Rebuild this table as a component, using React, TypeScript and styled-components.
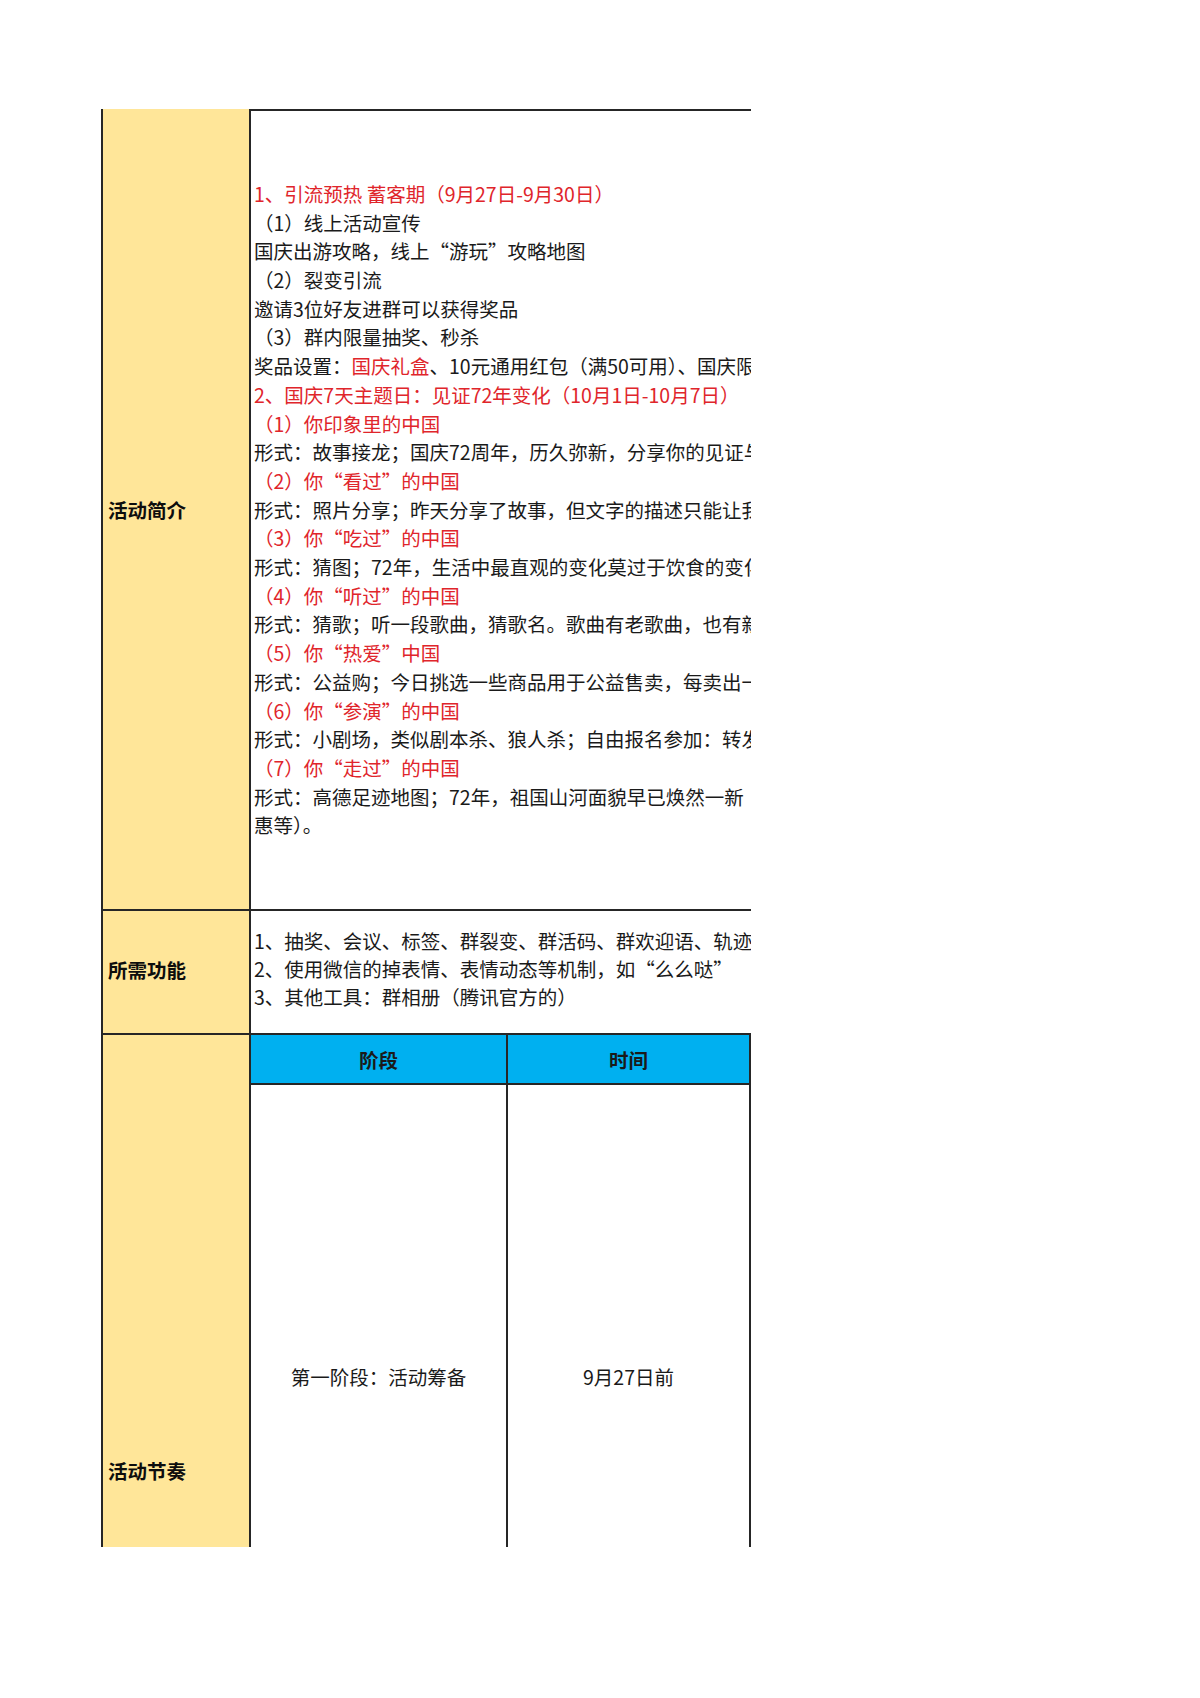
import styled, { createGlobalStyle } from 'styled-components';

const GlobalStyle = createGlobalStyle`
  html, body {
    margin: 0;
    padding: 0;
    background: #ffffff;
  }
  body {
    font-family: "Noto Sans CJK SC", "Noto Sans", sans-serif;
    color: #1a1a1a;
  }
`;

type Segment = { text: string; red?: boolean };
type Line = Segment[];

const intro: Line[] = [
  [{ text: '1、引流预热 蓄客期（9月27日-9月30日）', red: true }],
  [{ text: '（1）线上活动宣传' }],
  [{ text: '国庆出游攻略，线上“游玩”攻略地图' }],
  [{ text: '（2）裂变引流' }],
  [{ text: '邀请3位好友进群可以获得奖品' }],
  [{ text: '（3）群内限量抽奖、秒杀' }],
  [
    { text: '奖品设置：' },
    { text: '国庆礼盒', red: true },
    { text: '、10元通用红包（满50可用）、国庆限定周边、会员积分' },
  ],
  [{ text: '2、国庆7天主题日：见证72年变化（10月1日-10月7日）', red: true }],
  [{ text: '（1）你印象里的中国', red: true }],
  [{ text: '形式：故事接龙；国庆72周年，历久弥新，分享你的见证与回忆' }],
  [{ text: '（2）你“看过”的中国', red: true }],
  [{ text: '形式：照片分享；昨天分享了故事，但文字的描述只能让我们想象' }],
  [{ text: '（3）你“吃过”的中国', red: true }],
  [{ text: '形式：猜图；72年，生活中最直观的变化莫过于饮食的变化' }],
  [{ text: '（4）你“听过”的中国', red: true }],
  [{ text: '形式：猜歌；听一段歌曲，猜歌名。歌曲有老歌曲，也有新歌曲' }],
  [{ text: '（5）你“热爱”中国', red: true }],
  [{ text: '形式：公益购；今日挑选一些商品用于公益售卖，每卖出一件捐出' }],
  [{ text: '（6）你“参演”的中国', red: true }],
  [{ text: '形式：小剧场，类似剧本杀、狼人杀；自由报名参加：转发海报' }],
  [{ text: '（7）你“走过”的中国', red: true }],
  [{ text: '形式：高德足迹地图；72年，祖国山河面貌早已焕然一新（打卡优' }],
  [{ text: '惠等）。' }],
];

const features: string[] = [
  '1、抽奖、会议、标签、群裂变、群活码、群欢迎语、轨迹追踪',
  '2、使用微信的掉表情、表情动态等机制，如“么么哒”',
  '3、其他工具：群相册（腾讯官方的）',
];

const stages = [
  { stage: '第一阶段：活动筹备', time: '9月27日前', height: 584 },
  { stage: '第二阶段：引流预热', time: '9月27日-9月30日', height: 200 },
];

export default function App() {
  return (
    <>
      <GlobalStyle />
      <Page>
        <Sheet>
          <Row $height={802} $divider>
            <Label>活动简介</Label>
            <Content $topLine>
              {intro.map((line, i) => (
                <TextLine key={i}>
                  {line.map((seg, j) => (
                    <Seg key={j} $red={seg.red}>
                      {seg.text}
                    </Seg>
                  ))}
                </TextLine>
              ))}
            </Content>
          </Row>

          <Row $height={124} $divider $lift={6}>
            <Label>所需功能</Label>
            <Content>
              {features.map((f, i) => (
                <FeatureLine key={i}>{f}</FeatureLine>
              ))}
            </Content>
          </Row>

          <Row $height={870}>
            <Label>活动节奏</Label>
            <PlanTable>
              <HeadCell>阶段</HeadCell>
              <HeadCell>时间</HeadCell>
              {stages.map((s) => (
                <StageRow key={s.stage}>
                  <BodyCell style={{ height: s.height }}>{s.stage}</BodyCell>
                  <BodyCell style={{ height: s.height }}>{s.time}</BodyCell>
                </StageRow>
              ))}
            </PlanTable>
          </Row>
        </Sheet>
      </Page>
    </>
  );
}

const line = '2px solid #262626';

const Page = styled.div`
  padding: 109px 0 0 101px;
  height: 1698px;
  box-sizing: border-box;
`;

const Sheet = styled.div`
  width: 650px;
  height: 1438px;
  overflow: hidden;
  display: flex;
  flex-direction: column;
`;

const Row = styled.div<{ $height: number; $divider?: boolean; $lift?: number }>`
  display: grid;
  grid-template-columns: 150px minmax(0, 1fr);
  grid-template-rows: minmax(0, 1fr);
  flex: 0 0 auto;
  height: ${(p) => p.$height}px;
  box-sizing: border-box;
  ${(p) => (p.$divider ? `border-bottom: ${line};` : '')}
  & > * {
    padding-bottom: ${(p) => p.$lift ?? 0}px;
  }
`;

const Label = styled.div`
  background: #ffe699;
  border-left: ${line};
  border-right: ${line};
  display: flex;
  align-items: center;
  padding-left: 5px;
  font-size: 19.5px;
  font-weight: 700;
  color: #0d0d0d;
`;

const Content = styled.div<{ $topLine?: boolean }>`
  display: flex;
  flex-direction: column;
  justify-content: center;
  padding-left: 3px;
  overflow: hidden;
  font-size: 19.5px;
  ${(p) => (p.$topLine ? `border-top: ${line};` : '')}
`;

const TextLine = styled.div`
  white-space: nowrap;
  line-height: 28.7px;
`;

const Seg = styled.span<{ $red?: boolean }>`
  color: ${(p) => (p.$red ? '#e0252b' : '#1a1a1a')};
`;

const FeatureLine = styled.div`
  white-space: nowrap;
  line-height: 28px;
`;

const PlanTable = styled.div`
  display: grid;
  grid-template-columns: 257px 1fr;
  align-content: start;
  overflow: hidden;
`;

const HeadCell = styled.div`
  height: 48px;
  background: #00b0f0;
  border-bottom: ${line};
  border-right: ${line};
  display: flex;
  align-items: center;
  justify-content: center;
  font-size: 19.5px;
  font-weight: 700;
  color: #1a1a1a;
`;

const StageRow = styled.div`
  display: contents;
`;

const BodyCell = styled.div`
  box-sizing: border-box;
  border-right: ${line};
  border-bottom: ${line};
  display: flex;
  align-items: center;
  justify-content: center;
  font-size: 19.5px;
  color: #1a1a1a;
`;
